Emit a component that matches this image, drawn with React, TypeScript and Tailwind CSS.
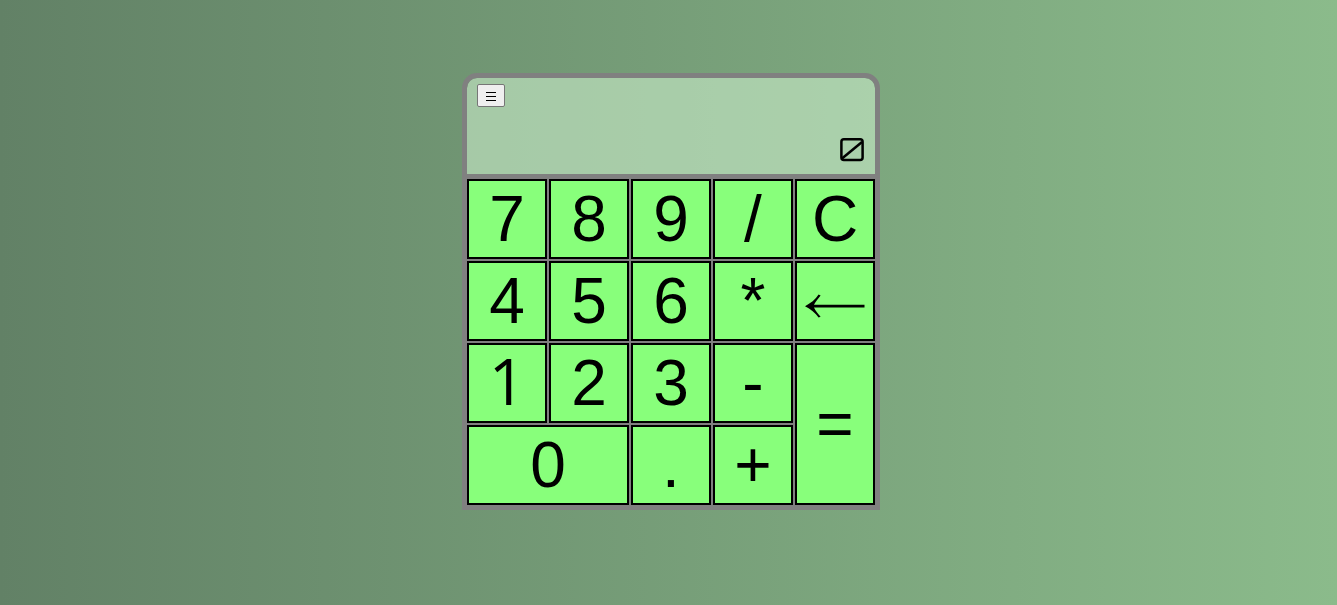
import { useState } from "react";
import type { ReactNode } from "react";

type Key = { label: string; name?: string; span?: string; face?: ReactNode };

function ArrowLeft() {
  return (
    <svg viewBox="0 0 60 24" className="mx-auto mt-2.5 h-6 w-[60px]" aria-hidden="true">
      <path d="M0 12.2C5.5 9.5 10.5 5.5 13.6 0.6L15.6 1.4C13 4.8 10.5 7.4 9 10.7H59.5V13.5H9C10.5 17 13 19.4 15.6 22.8L13.6 23.6C10.5 19 5.5 15 0 12.2Z" />
    </svg>
  );
}

function EmptyMark() {
  return (
    <svg
      viewBox="0 0 24 24"
      className="ml-auto h-6 w-6"
      fill="none"
      stroke="currentColor"
      strokeWidth="2.5"
      role="img"
      aria-label="Empty"
    >
      <rect x="1.4" y="1.3" width="21.2" height="20.7" rx="2.5" />
      <path d="M2 20.5L22 4" />
    </svg>
  );
}

const keys: Key[] = [
  { label: "7" },
  { label: "8" },
  { label: "9" },
  { label: "/", name: "Divide" },
  { label: "C", name: "Clear" },
  { label: "4" },
  { label: "5" },
  { label: "6" },
  { label: "*", name: "Multiply" },
  { label: "←", name: "Backspace", face: <ArrowLeft /> },
  {
    label: "1",
    face: <span className="font-['Open_Sans','Liberation_Sans',sans-serif] leading-[0]">1</span>,
  },
  { label: "2" },
  { label: "3" },
  { label: "-", name: "Subtract" },
  { label: "=", name: "Equals", span: "row-span-2" },
  { label: "0", span: "col-span-2" },
  { label: "." },
  { label: "+", name: "Add" },
];

function evaluate(text: string): string {
  const tokens = text.match(/\d+\.?\d*|\.\d+|[-+*/]/g) ?? [];
  const terms: number[] = [];
  let op = "+";
  for (const token of tokens) {
    if (/^[-+*/]$/.test(token)) {
      op = token;
      continue;
    }
    const n = parseFloat(token);
    if (op === "+") terms.push(n);
    else if (op === "-") terms.push(-n);
    else {
      const last = terms.pop() ?? 0;
      terms.push(op === "*" ? last * n : last / n);
    }
  }
  return terms.length ? String(terms.reduce((a, b) => a + b, 0)) : "";
}

export default function App() {
  const [entry, setEntry] = useState("");

  const press = (label: string) => {
    if (label === "C") setEntry("");
    else if (label === "←") setEntry(entry.slice(0, -1));
    else if (label === "=") setEntry(evaluate(entry));
    else setEntry(entry + label);
  };

  return (
    <main className="flex min-h-screen items-start justify-center bg-linear-to-r/srgb from-[#628166] to-[#8bbb8b] pt-[73px] pl-[5px] font-['Liberation_Sans',Arial,sans-serif] text-black">
      <div>
        <div className="flex h-[106px] flex-col justify-between rounded-t-[15px] border-5 border-[#808080] bg-[#c9edc9]/60 bg-clip-padding pt-1.5 pr-[11px] pb-3 pl-2.5">
          <button
            type="button"
            aria-label="Menu"
            className="flex h-[23px] w-7 items-center justify-center self-start rounded-[2px] border border-[#767676] bg-[#efefef] pt-0.5"
          >
            <svg viewBox="0 0 10 9" className="h-[9px] w-2.5" aria-hidden="true">
              <path d="M0 0H10V1H0ZM0 4H10V5H0ZM0 8H10V9H0Z" />
            </svg>
          </button>
          <output className="block text-right text-[32px] leading-6">
            {entry || <EmptyMark />}
          </output>
        </div>
        <div className="grid auto-rows-[80px] grid-cols-[repeat(5,80px)] gap-0.5 border-5 border-t-0 border-[#808080] bg-[#808080]">
          {keys.map(({ label, name, span, face }) => (
            <button
              key={label}
              type="button"
              aria-label={name}
              onClick={() => press(label)}
              className={`border-2 border-black bg-[#88ff7b] text-center text-[64px] leading-none ${span ?? ""}`}
            >
              {face ?? label}
            </button>
          ))}
        </div>
      </div>
    </main>
  );
}
